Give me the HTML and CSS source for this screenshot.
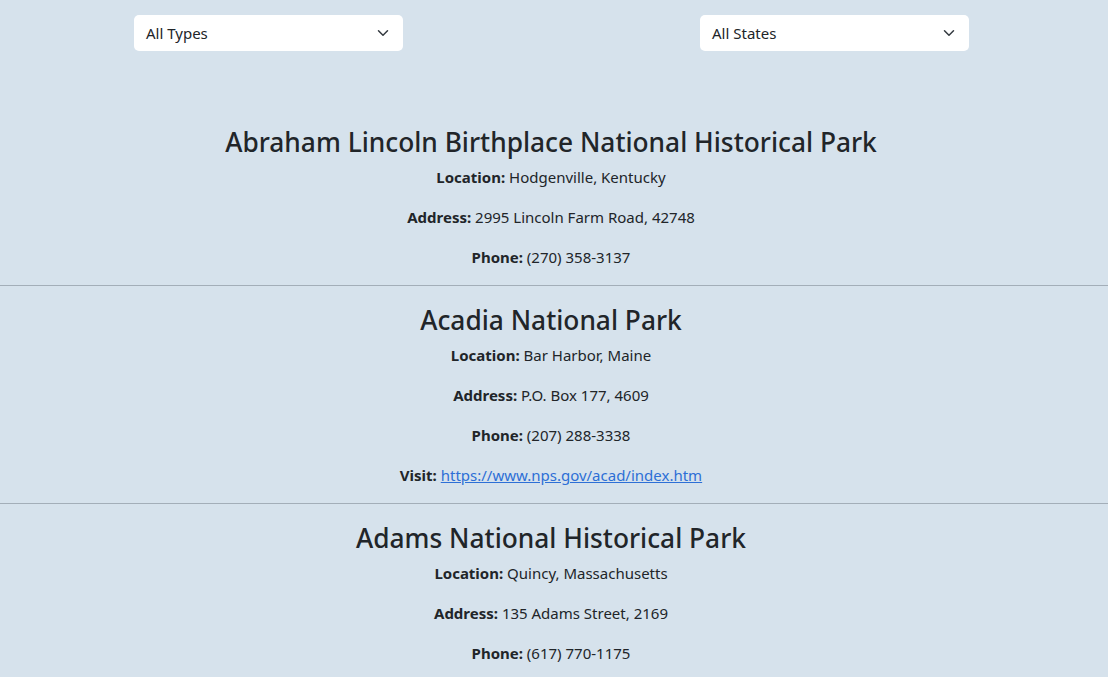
FILE: index.html
```html
<!DOCTYPE html>
<html lang="en">
<head>
<meta charset="utf-8">
<title>Parks</title>
<link rel="stylesheet" href="styles.css">
</head>
<body>
<div class="filters">
  <div class="select"><span>All Types</span><svg viewBox="0 0 16 16" width="16" height="12"><path d="m2 5 6 6 6-6" fill="none" stroke="#343a40" stroke-width="2" stroke-linecap="round" stroke-linejoin="round"/></svg></div>
  <div class="select"><span>All States</span><svg viewBox="0 0 16 16" width="16" height="12"><path d="m2 5 6 6 6-6" fill="none" stroke="#343a40" stroke-width="2" stroke-linecap="round" stroke-linejoin="round"/></svg></div>
</div>
<main class="list">
  <section class="park">
    <h3>Abraham Lincoln Birthplace National Historical Park</h3>
    <p><b>Location:</b> Hodgenville, Kentucky</p>
    <p><b>Address:</b> 2995 Lincoln Farm Road, 42748</p>
    <p><b>Phone:</b> (270) 358-3137</p>
  </section>
  <hr>
  <section class="park">
    <h3>Acadia National Park</h3>
    <p><b>Location:</b> Bar Harbor, Maine</p>
    <p><b>Address:</b> P.O. Box 177, 4609</p>
    <p><b>Phone:</b> (207) 288-3338</p>
    <p><b>Visit:</b> <a href="#">https://www.nps.gov/acad/index.htm</a></p>
  </section>
  <hr>
  <section class="park">
    <h3>Adams National Historical Park</h3>
    <p><b>Location:</b> Quincy, Massachusetts</p>
    <p><b>Address:</b> 135 Adams Street, 2169</p>
    <p><b>Phone:</b> (617) 770-1175</p>
  </section>
  <hr>
</main>
</body>
</html>
```
FILE: styles.css
```css
html, body { margin: 0; padding: 0; }
body {
  background: #d6e2ec;
  color: #212529;
  font-family: "Noto Sans", "Open Sans", sans-serif;
  font-size: 15px;
  line-height: 24px;
}
.filters {
  display: flex;
  gap: 297px;
  padding: 15px 0 0 134px;
}
.select {
  box-sizing: border-box;
  width: 269px;
  height: 36px;
  background: #fff;
  border-radius: 5px;
  display: flex;
  align-items: center;
  justify-content: space-between;
  padding: 0 12px;
  color: #212529;
  font-size: 15px;
}
.list {
  margin-top: 74px;
  text-align: center;
}
.park {
  padding-right: 6px;
}
.park h3 {
  margin: 0 0 6px;
  padding-top: 1px;
  font-size: 26.3px;
  line-height: 33px;
  font-weight: 500;
}
.park p { margin: 0 0 16px; }
.park b { font-weight: 700; }
.park a { color: #2d6fd6; }
hr {
  margin: 0 0 17px;
  border: 0;
  border-top: 1px solid #a3aeb8;
  height: 0;
}
```
